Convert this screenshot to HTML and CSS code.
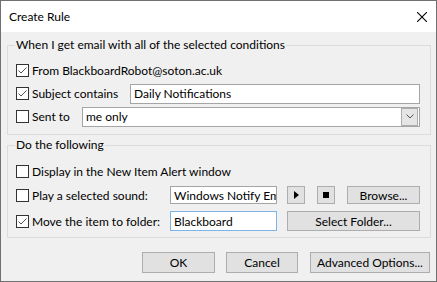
FILE: index.html
```html
<!DOCTYPE html>
<html lang="en">
<head>
    <meta charset="UTF-8">
    <title>Create Rule</title>
    <link rel="stylesheet" href="styles.css">
</head>
<body>
    <div class="window">
        <div class="titlebar">
            <span class="title">Create Rule</span>
            <svg class="close" width="10" height="10" viewBox="0 0 10 10">
                <path d="M0 0 L10 10 M10 0 L0 10" stroke="#000" stroke-width="1.1" fill="none"/>
            </svg>
        </div>

        <div class="content">
            <fieldset class="group conditions">
                <legend>When I get email with all of the selected conditions</legend>
                <div class="row">
                    <label class="check">
                        <span class="box"><svg width="11" height="11" viewBox="0 0 11 11"><path d="M1.5 5.5 L4 8 L9.5 2.5" stroke="#555" stroke-width="1" fill="none"/></svg></span>
                        From BlackboardRobot@soton.ac.uk
                    </label>
                </div>
                <div class="row">
                    <label class="check subject-label">
                        <span class="box"><svg width="11" height="11" viewBox="0 0 11 11"><path d="M1.5 5.5 L4 8 L9.5 2.5" stroke="#555" stroke-width="1" fill="none"/></svg></span>
                        Subject contains
                    </label>
                    <div class="field subject">Daily Notifications</div>
                </div>
                <div class="row">
                    <label class="check sent-label">
                        <span class="box"></span>
                        Sent to
                    </label>
                    <div class="field combo">
                        <span>me only</span>
                        <span class="drop"><svg width="8" height="5" viewBox="0 0 8 5"><path d="M0.5 0.5 L4 4 L7.5 0.5" stroke="#555" stroke-width="1" fill="none"/></svg></span>
                    </div>
                </div>
            </fieldset>

            <fieldset class="group actions">
                <legend>Do the following</legend>
                <div class="row">
                    <label class="check">
                        <span class="box"></span>
                        Display in the New Item Alert window
                    </label>
                </div>
                <div class="row">
                    <label class="check action-label">
                        <span class="box"></span>
                        Play a selected sound:
                    </label>
                    <div class="field small">Windows Notify Em</div>
                    <button class="btn icon-btn play"><span class="tri"></span></button>
                    <button class="btn icon-btn stop"><span class="sq"></span></button>
                    <button class="btn browse">Browse...</button>
                </div>
                <div class="row last">
                    <label class="check action-label">
                        <span class="box"><svg width="11" height="11" viewBox="0 0 11 11"><path d="M1.5 5.5 L4 8 L9.5 2.5" stroke="#555" stroke-width="1" fill="none"/></svg></span>
                        Move the item to folder:
                    </label>
                    <div class="field small focused">Blackboard</div>
                    <button class="btn folder">Select Folder...</button>
                </div>
            </fieldset>

            <div class="buttons">
                <button class="btn ok">OK</button>
                <button class="btn cancel">Cancel</button>
                <button class="btn advanced">Advanced Options...</button>
            </div>
        </div>
    </div>
</body>
</html>
```
FILE: styles.css
```css
html, body {
    margin: 0;
    padding: 0;
}
body {
    font-family: Lato, "Liberation Sans", sans-serif;
    font-size: 12px;
    color: #000;
    background: #f0f0f0;
}
.window {
    width: 437px;
    height: 282px;
    box-sizing: border-box;
    border: 1px solid #707070;
    background: #f0f0f0;
    display: flex;
    flex-direction: column;
}
.titlebar {
    height: 31px;
    flex: none;
    background: #fff;
    display: flex;
    align-items: center;
    justify-content: space-between;
    padding: 0 9px 0 8px;
}
.close {
    display: block;
}
.content {
    padding: 5px 5px 0 6px;
}
.group {
    margin: 0;
    min-width: 0;
    border: 1px solid #dcdcdc;
    padding: 6px 9px 6px 8px;
}
.group legend {
    padding: 0 1px;
    margin-left: -1px;
    line-height: 16px;
}
.group.actions {
    margin-top: 2px;
    padding-bottom: 4px;
}
.row {
    display: flex;
    align-items: center;
    height: 23px;
}
.actions .row {
    height: 24px;
}
.actions .row.last {
    margin-top: 2px;
}
.check {
    display: flex;
    align-items: center;
    gap: 3px;
    flex: none;
}
.box {
    width: 13px;
    height: 13px;
    box-sizing: border-box;
    border: 1px solid #333;
    background: #fff;
    display: flex;
    align-items: center;
    justify-content: center;
}
.box svg {
    display: block;
}
.subject-label {
    width: 114px;
}
.sent-label {
    width: 66px;
}
.action-label {
    width: 154px;
}
.field {
    height: 20px;
    box-sizing: border-box;
    border: 1px solid #a5a5a5;
    background: #fff;
    padding: 0 3px;
    display: flex;
    align-items: center;
    white-space: nowrap;
    overflow: hidden;
}
.subject {
    width: 290px;
}
.combo {
    width: 338px;
    justify-content: space-between;
    padding-right: 1px;
}
.drop {
    width: 17px;
    height: 18px;
    box-sizing: border-box;
    border: 1px solid #adadad;
    background: #e5e5e5;
    display: flex;
    align-items: center;
    justify-content: center;
}
.drop svg {
    display: block;
}
.field.small {
    width: 107px;
    height: 18px;
}
.field.focused {
    height: 20px;
    border-color: #7eb4ea;
}
.btn {
    font: inherit;
    color: #000;
    background: #e1e1e1;
    border: 1px solid #adadad;
    border-radius: 0;
    height: 18px;
    padding: 0;
    box-sizing: border-box;
    display: flex;
    align-items: center;
    justify-content: center;
}
.icon-btn {
    width: 18px;
    margin-left: 12px;
}
.play {
    margin-left: 10px;
}
.tri {
    width: 0;
    height: 0;
    border-top: 4px solid transparent;
    border-bottom: 4px solid transparent;
    border-left: 5px solid #000;
    margin-left: 1px;
}
.sq {
    width: 6px;
    height: 6px;
    background: #000;
}
.browse {
    width: 73px;
    margin-left: 12px;
}
.folder {
    width: 133px;
    height: 20px;
    margin-left: 10px;
}
.buttons {
    display: flex;
    justify-content: flex-end;
    margin-top: 14px;
    padding-right: 1px;
}
.buttons .btn {
    height: 21px;
}
.ok {
    width: 73px;
}
.cancel {
    width: 72px;
    margin-left: 11px;
}
.advanced {
    width: 120px;
    margin-left: 12px;
}
```
